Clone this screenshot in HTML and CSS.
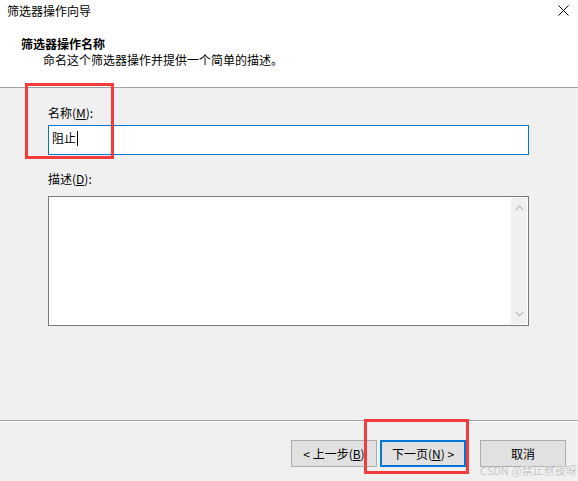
FILE: index.html
```html
<!DOCTYPE html>
<html lang="zh-CN">
<head>
<meta charset="utf-8">
<title>筛选器操作向导</title>
<link rel="stylesheet" href="styles.css">
</head>
<body>
<div class="window">
  <div class="top">
    <div class="titlebar">
      <span class="title">筛选器操作向导</span>
      <svg class="close" width="11" height="11" viewBox="0 0 11 11"><path d="M0.5 0.5 L10.5 10.5 M10.5 0.5 L0.5 10.5" stroke="#000" stroke-width="1" fill="none"/></svg>
    </div>
    <div class="heading">筛选器操作名称</div>
    <div class="desc">命名这个筛选器操作并提供一个简单的描述。</div>
  </div>
  <div class="body">
    <div class="label">名称(<u>M</u>):</div>
    <div class="input">阻止<span class="caret"></span></div>
    <div class="label label-desc">描述(<u>D</u>):</div>
    <div class="textarea">
      <div class="scrollbar">
        <svg width="9" height="6" viewBox="0 0 9 6"><path d="M0.8 5 L4.5 1.3 L8.2 5" stroke="#c4c4c4" stroke-width="1.6" fill="none"/></svg>
        <svg width="9" height="6" viewBox="0 0 9 6"><path d="M0.8 1 L4.5 4.7 L8.2 1" stroke="#c4c4c4" stroke-width="1.6" fill="none"/></svg>
      </div>
    </div>
  </div>
  <div class="footer">
    <div class="btn">&lt; 上一步(<u>B</u>)</div>
    <div class="btn btn-default">下一页(<u>N</u>) &gt;</div>
    <div class="btn btn-cancel">取消</div>
  </div>
  <div class="mark mark-name"></div>
  <div class="mark mark-next"></div>
  <div class="watermark">CSDN @禁止熬夜呀</div>
</div>
</body>
</html>
```
FILE: styles.css
```css
* { box-sizing: border-box; }
html, body {
  margin: 0;
  padding: 0;
  width: 578px;
  height: 481px;
  overflow: hidden;
  background: #f0f0f0;
}
.window {
  position: relative;
  width: 578px;
  height: 481px;
  font-family: "Noto Sans CJK SC", "Noto Sans", sans-serif;
  font-size: 12px;
  color: #000;
  background: #f0f0f0;
}
.top {
  height: 88px;
  background: #fff;
  border-bottom: 1px solid #a0a0a0;
}
.titlebar {
  height: 22px;
  display: flex;
  align-items: center;
  justify-content: space-between;
  padding: 0 9px 0 7px;
}
.title { line-height: 16px; }
.close { display: block; margin-top: -2px; }
.heading {
  margin-top: 14px;
  padding-left: 21px;
  line-height: 16px;
  font-weight: bold;
}
.desc {
  padding-left: 43px;
  line-height: 16px;
}
.body {
  height: 333px;
  padding: 17px 0 0 48px;
  border-bottom: 1px solid #a0a0a0;
  box-shadow: 0 1px 0 #fff;
}
.label { line-height: 16px; }
.input {
  margin-top: 4px;
  width: 481px;
  height: 30px;
  border: 1px solid #0078d7;
  background: #fff;
  padding: 4px 0 0 3px;
  line-height: 16px;
}
.caret {
  display: inline-block;
  width: 1px;
  height: 15px;
  background: #000;
  vertical-align: -3px;
  margin-left: 1px;
}
.label-desc { margin-top: 16px; }
.textarea {
  margin-top: 9px;
  width: 481px;
  height: 130px;
  border: 1px solid #7a7a7a;
  background: #fff;
  padding: 1px;
  display: flex;
  justify-content: flex-end;
}
.scrollbar {
  width: 16px;
  background: #f0f0f0;
  display: flex;
  flex-direction: column;
  justify-content: space-between;
  align-items: center;
  padding: 7px 0 7px;
}
.scrollbar svg { display: block; }
.footer {
  display: flex;
  padding: 19px 0 0 291px;
}
.btn {
  width: 86px;
  height: 27px;
  background: #e1e1e1;
  border: 1px solid #adadad;
  display: flex;
  align-items: center;
  justify-content: center;
  line-height: 16px;
  white-space: nowrap;
}
.btn-default {
  margin-left: 3px;
  border: 2px solid #0078d7;
}
.btn-cancel { margin-left: 14px; }
.mark {
  position: absolute;
  border: 3px solid #f23c3c;
}
.mark-name { left: 25px; top: 83px; width: 89px; height: 76px; }
.mark-next { left: 364px; top: 419px; width: 105px; height: 55px; }
.watermark {
  position: absolute;
  left: 480px;
  top: 463px;
  font-size: 11px;
  line-height: 14px;
  color: #c2c2c2;
  text-shadow: 0 0 1px #ffffff;
  white-space: nowrap;
}
```
